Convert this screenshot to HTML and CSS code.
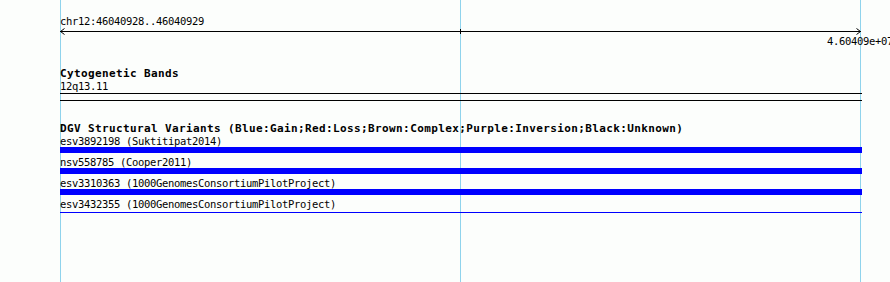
FILE: index.html
```html
<!DOCTYPE html>
<html lang="en">
<head>
  <meta charset="UTF-8">
  <title>Genome view</title>
  <link rel="stylesheet" href="styles.css">
</head>
<body>
  <div class="view">
    <div class="content">
      <div class="ruler">
        <div class="line">chr12:46040928..46040929</div>
        <svg class="axis" width="802" height="7" viewBox="0 0 802 7">
          <line x1="0" y1="3.5" x2="801" y2="3.5" stroke="#000" stroke-width="1"/>
          <polyline points="4.5,0.5 0.5,3.5 4.5,6.5" fill="none" stroke="#000" stroke-width="1"/>
          <polyline points="796.5,0.5 800.5,3.5 796.5,6.5" fill="none" stroke="#000" stroke-width="1"/>
          <line x1="400.5" y1="1" x2="400.5" y2="6" stroke="#000" stroke-width="1"/>
        </svg>
        <div class="line axis-end">4.60409e+07</div>
      </div>

      <div class="track cyto">
        <div class="line title">Cytogenetic Bands</div>
        <div class="line band">12q13.11</div>
      </div>

      <div class="track dgv">
        <div class="line title">DGV Structural Variants (Blue:Gain;Red:Loss;Brown:Complex;Purple:Inversion;Black:Unknown)</div>
        <div class="line">esv3892198 (Suktitipat2014)</div>
        <div class="sv-bar"></div>
        <div class="line">nsv558785 (Cooper2011)</div>
        <div class="sv-bar"></div>
        <div class="line">esv3310363 (1000GenomesConsortiumPilotProject)</div>
        <div class="sv-bar"></div>
        <div class="line">esv3432355 (1000GenomesConsortiumPilotProject)</div>
        <div class="sv-bar thin"></div>
      </div>
    </div>
  </div>
</body>
</html>
```

FILE: styles.css
```css
body {
  margin: 0;
  overflow: hidden;
  background: #fcfefc;
  color: #000;
  font-family: "DejaVu Sans Mono", monospace;
  font-size: 10.5px;
  letter-spacing: -0.32px;
}

.view {
  height: 282px;
  background:
    linear-gradient(#8fd3ec, #8fd3ec) 60px 0 / 1px 100% no-repeat,
    linear-gradient(#8fd3ec, #8fd3ec) 460px 0 / 1px 100% no-repeat,
    linear-gradient(#8fd3ec, #8fd3ec) 860px 0 / 1px 100% no-repeat;
}

.content {
  margin-left: 60px;
  width: 802px;
  padding-top: 15px;
}

.line {
  height: 12px;
  line-height: 12px;
  white-space: nowrap;
}

.axis {
  display: block;
  margin-top: 1px;
}

.axis-end {
  text-align: right;
  margin-right: -31px;
}

.title {
  font-size: 11px;
  font-weight: bold;
  letter-spacing: 0.38px;
}

.cyto {
  margin-top: 21px;
}

.band {
  height: 13px;
  border-bottom: 1px solid #000;
}

.dgv {
  margin-top: 6px;
  border-top: 1px solid #000;
  padding-top: 22px;
}

.sv-bar {
  height: 6px;
  margin-bottom: 3px;
  background: #0000ff;
}

.sv-bar.thin {
  height: 1px;
  margin-top: 2px;
}
```
